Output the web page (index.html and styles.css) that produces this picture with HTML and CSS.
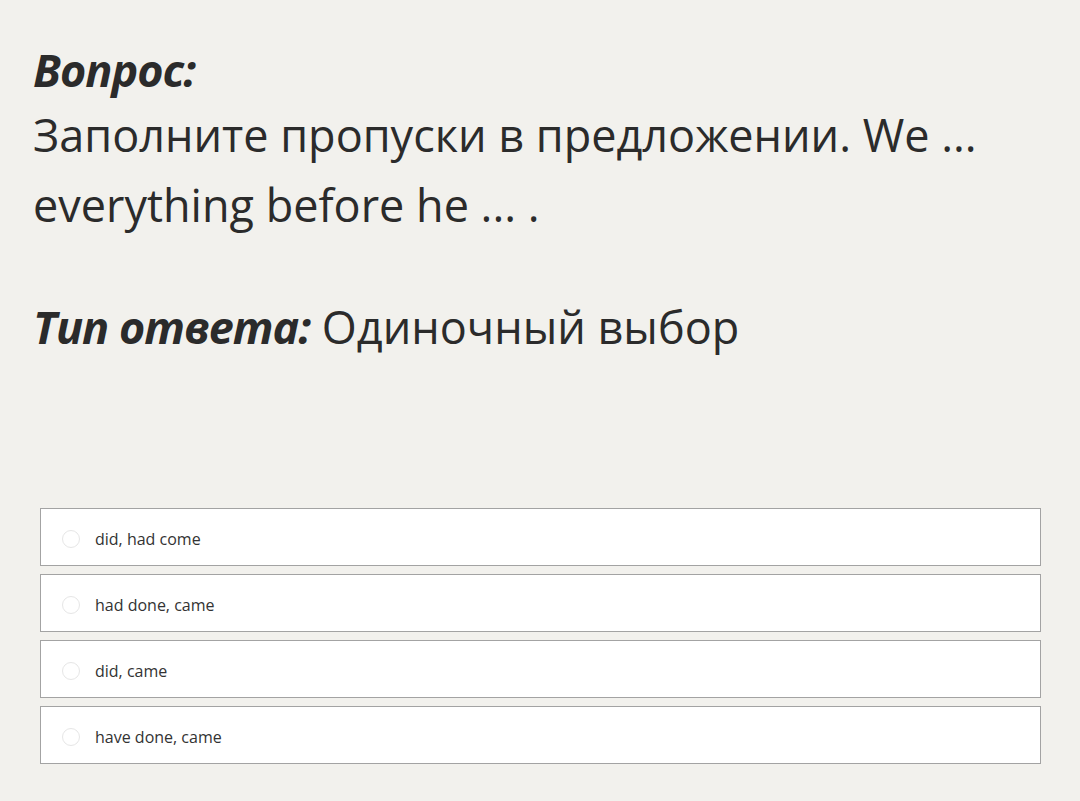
FILE: index.html
```html
<!DOCTYPE html>
<html lang="ru">
<head>
    <meta charset="UTF-8">
    <title>Вопрос</title>
    <link rel="stylesheet" href="styles.css">
</head>
<body>
    <div class="question">
        <div class="label">Вопрос:</div>
        <div class="text">Заполните пропуски в предложении. We ... everything before he ... .</div>
        <div class="type"><span class="label">Тип ответа:</span> Одиночный выбор</div>
    </div>
    <div class="answers">
        <label class="answer"><span class="radio"></span>did, had come</label>
        <label class="answer"><span class="radio"></span>had done, came</label>
        <label class="answer"><span class="radio"></span>did, came</label>
        <label class="answer"><span class="radio"></span>have done, came</label>
    </div>
</body>
</html>
```

FILE: styles.css
```css
body {
    margin: 0;
    background-color: #f2f1ed;
    font-family: "Open Sans", "Noto Sans", sans-serif;
    color: #2b2b2b;
}

.question {
    padding: 40px 33px 0 33px;
    font-size: 45px;
    width: 970px;
}

.label {
    font-weight: bold;
    font-style: italic;
    letter-spacing: -1px;
}

.question > .label {
    line-height: 60px;
}

.text {
    line-height: 70px;
}

.type {
    margin-top: 57px;
    line-height: 60px;
}

.answers {
    margin: 151px 39px 0 40px;
    display: flex;
    flex-direction: column;
    gap: 8px;
}

.answer {
    box-sizing: border-box;
    display: flex;
    align-items: center;
    height: 58px;
    padding: 3px 0 0 21px;
    background: #fff;
    border: 1px solid #a3a3a3;
    font-size: 16px;
    color: #333;
}

.radio {
    width: 16px;
    height: 16px;
    border: 1px solid #e6e6e6;
    border-radius: 50%;
    margin-right: 15px;
}
```
